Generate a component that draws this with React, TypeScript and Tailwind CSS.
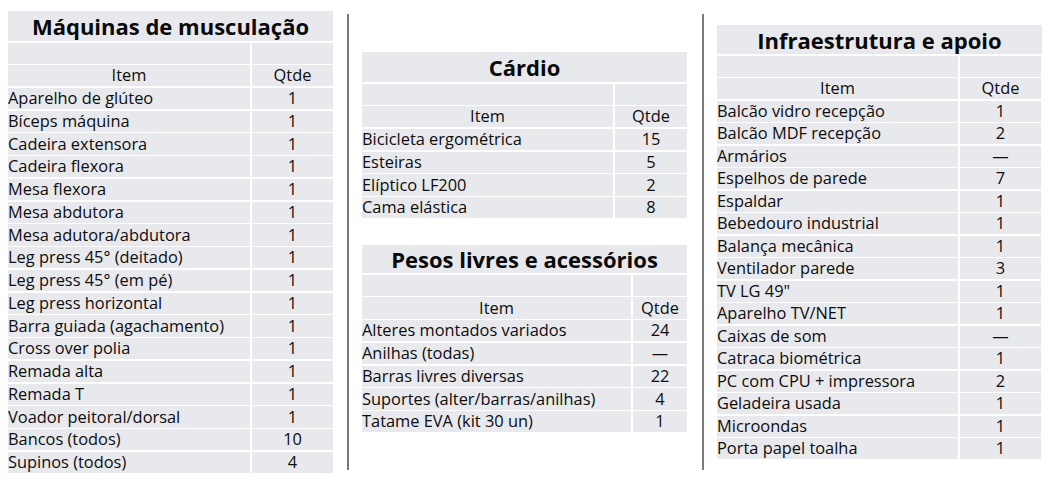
import React from "react";

type Row = [string, string];

const musc: Row[] = [
  ["Aparelho de glúteo", "1"],
  ["Bíceps máquina", "1"],
  ["Cadeira extensora", "1"],
  ["Cadeira flexora", "1"],
  ["Mesa flexora", "1"],
  ["Mesa abdutora", "1"],
  ["Mesa adutora/abdutora", "1"],
  ["Leg press 45° (deitado)", "1"],
  ["Leg press 45° (em pé)", "1"],
  ["Leg press horizontal", "1"],
  ["Barra guiada (agachamento)", "1"],
  ["Cross over polia", "1"],
  ["Remada alta", "1"],
  ["Remada T", "1"],
  ["Voador peitoral/dorsal", "1"],
  ["Bancos (todos)", "10"],
  ["Supinos (todos)", "4"],
];

const cardio: Row[] = [
  ["Bicicleta ergométrica", "15"],
  ["Esteiras", "5"],
  ["Elíptico LF200", "2"],
  ["Cama elástica", "8"],
];

const pesos: Row[] = [
  ["Alteres montados variados", "24"],
  ["Anilhas (todas)", "—"],
  ["Barras livres diversas", "22"],
  ["Suportes (alter/barras/anilhas)", "4"],
  ["Tatame EVA (kit 30 un)", "1"],
];

const infra: Row[] = [
  ["Balcão vidro recepção", "1"],
  ["Balcão MDF recepção", "2"],
  ["Armários", "—"],
  ["Espelhos de parede", "7"],
  ["Espaldar", "1"],
  ["Bebedouro industrial", "1"],
  ["Balança mecânica", "1"],
  ["Ventilador parede", "3"],
  ['TV LG 49"', "1"],
  ["Aparelho TV/NET", "1"],
  ["Caixas de som", "—"],
  ["Catraca biométrica", "1"],
  ["PC com CPU + impressora", "2"],
  ["Geladeira usada", "1"],
  ["Microondas", "1"],
  ["Porta papel toalha", "1"],
];

function Table({
  title,
  rows,
  cols,
  titleH,
  rowH = "h-[21.25px]",
}: {
  title: string;
  rows: Row[];
  cols: string;
  titleH: string;
  rowH?: string;
}) {
  return (
    <div className="flex flex-col w-[325px] gap-[1.5px]">
      <div
        className={`bg-[#e8e9ec] ${titleH} flex items-center justify-center text-[22px] font-bold text-[#0a0a0a]`}
      >
        {title}
      </div>
      <div className={`grid ${cols} gap-x-[2px] gap-y-[1.5px]`}>
        <div className="bg-[#e8e9ec] h-[21px]" />
        <div className="bg-[#e8e9ec] h-[21px]" />
        <div className={`bg-[#e8e9ec] ${rowH} flex items-center justify-center`}>Item</div>
        <div className={`bg-[#e8e9ec] ${rowH} flex items-center justify-center`}>Qtde</div>
        {rows.map(([a, b], i) => (
          <React.Fragment key={i}>
            <div className={`bg-[#e8e9ec] ${rowH} flex items-center whitespace-nowrap`}>
              {a}
            </div>
            <div className={`bg-[#e8e9ec] ${rowH} flex items-center justify-center`}>
              {b}
            </div>
          </React.Fragment>
        ))}
      </div>
    </div>
  );
}

export default function App() {
  return (
    <div
      className="w-[1054px] h-[480px] bg-white flex text-[16.4px] text-[#0d0d0d] leading-none overflow-hidden"
      style={{ fontFamily: '"Open Sans", "Liberation Sans", sans-serif' }}
    >
      <div className="pl-[8px] pt-[11px]">
        <Table title="Máquinas de musculação" rows={musc} cols="grid-cols-[242px_81px]" titleH="h-[30px]" />
      </div>
      <div className="ml-[14px] mt-[14px] w-[2px] h-[456px] bg-[#7a7a7a]" />
      <div className="ml-[13px] pt-[52px] flex flex-col gap-[27px]">
        <Table title="Cárdio" rows={cardio} cols="grid-cols-[251px_72px]" titleH="h-[30px]" />
        <Table title="Pesos livres e acessórios" rows={pesos} cols="grid-cols-[269px_54px]" titleH="h-[28px]" />
      </div>
      <div className="ml-[15px] mt-[14px] w-[2px] h-[456px] bg-[#7a7a7a]" />
      <div className="ml-[13px] pt-[25px]">
        <Table
          title="Infraestrutura e apoio"
          rows={infra}
          cols="grid-cols-[241px_81px]"
          titleH="h-[29px]"
          rowH="h-[21px]"
        />
      </div>
    </div>
  );
}
